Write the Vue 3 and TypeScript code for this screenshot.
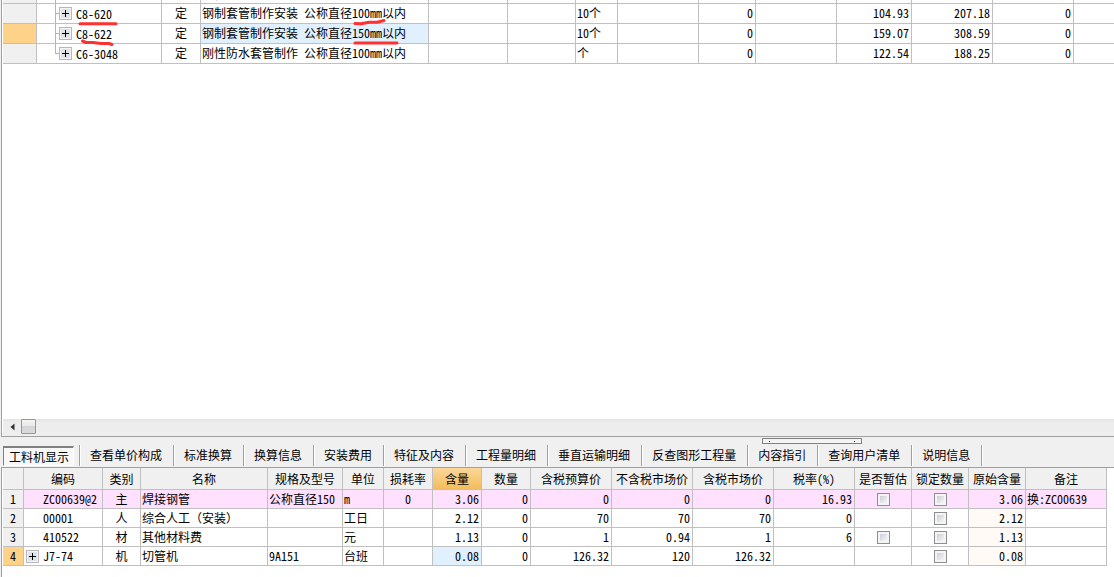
<script setup lang="ts">
import { ref } from 'vue'

interface QuotaRow {
  code: string
  name: string
  unit: string
  price: string
  total: string
  active?: boolean
}

interface MaterialRow {
  no: number
  code: string
  kind: string
  name: string
  spec: string
  unit: string
  loss: string
  content: string
  qty: string
  budget: string
  marketNet: string
  market: string
  tax: string
  estimate: boolean
  origin: string
  note: string
  expandable?: boolean
}

const quotaCols: number[] = [34, 125, 39, 228, 79, 68, 42, 81, 57, 81, 75, 81, 81]

const quotas: QuotaRow[] = [
  { code: 'C8-620', name: '钢制套管制作安装 公称直径100mm以内', unit: '10个', price: '104.93', total: '207.18' },
  { code: 'C8-622', name: '钢制套管制作安装 公称直径150mm以内', unit: '10个', price: '159.07', total: '308.59', active: true },
  { code: 'C6-3048', name: '刚性防水套管制作 公称直径100mm以内', unit: '个', price: '122.54', total: '188.25' },
]

const tabs: string[] = [
  '工料机显示', '查看单价构成', '标准换算', '换算信息', '安装费用', '特征及内容',
  '工程量明细', '垂直运输明细', '反查图形工程量', '内容指引', '查询用户清单', '说明信息',
]
const current = ref(0)

const headers: { text: string; width: number }[] = [
  { text: '', width: 21 },
  { text: '编码', width: 79 },
  { text: '类别', width: 38 },
  { text: '名称', width: 127 },
  { text: '规格及型号', width: 75 },
  { text: '单位', width: 41 },
  { text: '损耗率', width: 49 },
  { text: '含量', width: 49 },
  { text: '数量', width: 49 },
  { text: '含税预算价', width: 81 },
  { text: '不含税市场价', width: 81 },
  { text: '含税市场价', width: 81 },
  { text: '税率(%)', width: 81 },
  { text: '是否暂估', width: 57 },
  { text: '锁定数量', width: 57 },
  { text: '原始含量', width: 57 },
  { text: '备注', width: 81 },
]

const materials: MaterialRow[] = [
  { no: 1, code: 'ZC00639@2', kind: '主', name: '焊接钢管', spec: '公称直径150', unit: 'm', loss: '0', content: '3.06', qty: '0', budget: '0', marketNet: '0', market: '0', tax: '16.93', estimate: true, origin: '3.06', note: '换:ZC00639' },
  { no: 2, code: '00001', kind: '人', name: '综合人工（安装）', spec: '', unit: '工日', loss: '', content: '2.12', qty: '0', budget: '70', marketNet: '70', market: '70', tax: '0', estimate: false, origin: '2.12', note: '' },
  { no: 3, code: '410522', kind: '材', name: '其他材料费', spec: '', unit: '元', loss: '', content: '1.13', qty: '0', budget: '1', marketNet: '0.94', market: '1', tax: '6', estimate: true, origin: '1.13', note: '' },
  { no: 4, code: 'J7-74', kind: '机', name: '切管机', spec: '9A151', unit: '台班', loss: '', content: '0.08', qty: '0', budget: '126.32', marketNet: '120', market: '126.32', tax: '', estimate: false, origin: '0.08', note: '', expandable: true },
]
</script>

<template>
  <main class="window">
    <section class="pane upper">
      <div class="quota-wrap">
        <table class="grid quota">
          <colgroup>
            <col v-for="(w, i) in quotaCols" :key="i" :style="{ width: w + 'px' }" />
            <col />
          </colgroup>
          <tbody>
            <tr class="partial">
              <td class="head"></td>
              <td><div class="tree"><span class="branch"></span></div></td>
              <td></td>
              <td><div class="clip">刚性防水套管制作 安装</div></td>
              <td v-for="n in 10" :key="n"></td>
            </tr>
            <tr v-for="(q, i) in quotas" :key="q.code" :class="{ active: q.active }">
              <td class="head"></td>
              <td>
                <div class="tree">
                  <span class="branch" :class="{ last: i === quotas.length - 1 }"></span>
                  <button class="plus" type="button" :aria-label="'展开 ' + q.code"></button>
                  <span class="tree-text">{{ q.code }}</span>
                </div>
              </td>
              <td class="mid">定</td>
              <td class="name">{{ q.name }}</td>
              <td></td>
              <td></td>
              <td>{{ q.unit }}</td>
              <td></td>
              <td class="num">0</td>
              <td></td>
              <td class="num">{{ q.price }}</td>
              <td class="num">{{ q.total }}</td>
              <td class="num">0</td>
              <td></td>
            </tr>
          </tbody>
        </table>
        <svg class="marks" width="440" height="64" viewBox="0 0 440 64" aria-hidden="true">
          <path d="M77 23.8H113" />
          <path d="M79.500 41L83 42.500L90 42.500L98 43.500L106 43.500L109 44.500" />
          <path d="M352 23.500L358 23.800L366 22.300L374 22.300L381 20.500" />
          <path d="M352 43H394" />
        </svg>
      </div>
      <div class="blank"></div>
      <div class="scrollbar">
        <button class="arrow" type="button" aria-label="向左滚动">
          <svg width="5" height="8" viewBox="0 0 5 8"><path d="M4.500 0.500V7.500L0.500 4Z" fill="#333" /></svg>
        </button>
        <span class="thumb"></span>
      </div>
    </section>

    <nav class="tabs">
      <button
        v-for="(t, i) in tabs"
        :key="t"
        type="button"
        class="tab"
        :class="{ selected: current === i }"
        @click="current = i"
      ><span>{{ t }}</span></button>
      <div class="splitter"><i></i><i></i></div>
    </nav>

    <section class="pane lower">
      <table class="grid material">
        <colgroup>
          <col v-for="(h, i) in headers" :key="i" :style="{ width: h.width + 'px' }" />
        </colgroup>
        <thead>
          <tr>
            <th v-for="(h, i) in headers" :key="i" :class="{ hot: h.text === '含量' }">{{ h.text }}</th>
          </tr>
        </thead>
        <tbody>
          <tr v-for="m in materials" :key="m.no" :class="{ pink: m.no === 1, active: m.no === 4 }">
            <td class="head mid">{{ m.no }}</td>
            <td>
              <div class="tree">
                <span class="slot"><button v-if="m.expandable" class="plus" type="button" :aria-label="'展开 ' + m.code"></button></span>
                <span class="tree-text">{{ m.code }}</span>
              </div>
            </td>
            <td class="mid">{{ m.kind }}</td>
            <td>{{ m.name }}</td>
            <td>{{ m.spec }}</td>
            <td>{{ m.unit }}</td>
            <td class="mid">{{ m.loss }}</td>
            <td class="num content">{{ m.content }}</td>
            <td class="num">{{ m.qty }}</td>
            <td class="num">{{ m.budget }}</td>
            <td class="num">{{ m.marketNet }}</td>
            <td class="num">{{ m.market }}</td>
            <td class="num">{{ m.tax }}</td>
            <td class="mid"><input v-if="m.estimate" type="checkbox" :aria-label="m.name + ' 是否暂估'" /></td>
            <td class="mid"><input type="checkbox" :aria-label="m.name + ' 锁定数量'" /></td>
            <td class="num origin">{{ m.origin }}</td>
            <td>{{ m.note }}</td>
          </tr>
        </tbody>
      </table>
    </section>
  </main>
</template>

<style>
body {
  background: #f0f0f0;
}
</style>

<style scoped>
.window {
  display: flex;
  flex-direction: column;
  min-height: 100vh;
  overflow: hidden;
  background: #f0f0f0;
  color: #000;
  font-family: 'Noto Sans Mono CJK SC', 'Noto Sans CJK SC', monospace;
  font-size: 12px;
  line-height: 18px;
}
button {
  margin: 0;
  padding: 0;
  border: 0;
  background: none;
  color: inherit;
  font: inherit;
}
.pane {
  margin-left: 1px;
  border-left: 1px solid #a0a0a0;
  padding-left: 1px;
  background: #fff;
}
.upper {
  flex: 1;
  display: flex;
  flex-direction: column;
  border-bottom: 1px solid #a0a0a0;
}
.quota-wrap {
  position: relative;
}
.grid {
  width: 100%;
  table-layout: fixed;
  border-collapse: separate;
  border-spacing: 0;
}
.grid td,
.grid th {
  box-sizing: border-box;
  padding: 0 0 0 1px;
  border-right: 1px solid #c0c0c0;
  border-bottom: 1px solid #c0c0c0;
  white-space: nowrap;
  overflow: hidden;
  font-weight: normal;
  vertical-align: middle;
}
.quota td {
  height: 20px;
  line-height: 18px;
  vertical-align: top;
}
.quota td:last-child {
  border-right: 0;
}
.quota .partial td {
  height: 4px;
}
.partial .tree,
.clip {
  height: 3px;
  overflow: hidden;
}
.clip {
  display: flex;
  align-items: flex-end;
  line-height: 18px;
}
.grid td.head {
  padding: 0;
  background: #f0f0f0;
}
.grid .active td.head {
  background: #ffd28a;
}
.active .name,
.active .content {
  background: #e0f0ff;
}
.grid .mid {
  padding: 0;
  text-align: center;
}
.grid td.num {
  padding: 0 2px 0 0;
  text-align: right;
}
.tree {
  display: flex;
  align-items: center;
}
.quota .tree {
  height: 19px;
  padding-left: 17px;
}
.quota .partial .tree {
  height: 3px;
}
.branch {
  align-self: stretch;
  width: 4px;
  flex: none;
  background:
    linear-gradient(#b4b4b4, #b4b4b4) 0 0 / 1px 100% no-repeat,
    linear-gradient(#b4b4b4, #b4b4b4) 0 9px / 4px 1px no-repeat;
}
.branch.last {
  background:
    linear-gradient(#b4b4b4, #b4b4b4) 0 0 / 1px 10px no-repeat,
    linear-gradient(#b4b4b4, #b4b4b4) 0 9px / 4px 1px no-repeat;
}
.plus {
  box-sizing: border-box;
  flex: none;
  width: 13px;
  height: 13px;
  border: 1px solid #b8b8b8;
  background:
    linear-gradient(#000, #000) center / 7px 1px no-repeat,
    linear-gradient(#000, #000) center / 1px 7px no-repeat,
    #e0e4e9;
  box-shadow: inset 0 0 0 1px #f4f4f4;
}
.quota .tree-text {
  padding-left: 4px;
}
.slot {
  display: flex;
  width: 18px;
  padding-left: 1px;
  box-sizing: border-box;
}
.marks {
  position: absolute;
  left: 0;
  top: 0;
  pointer-events: none;
}
.marks path {
  fill: none;
  stroke: #ff3030;
  stroke-width: 3;
  stroke-linecap: round;
  stroke-linejoin: round;
}
.blank {
  flex: 1;
}
.scrollbar {
  display: flex;
  height: 17px;
  background: linear-gradient(#e3e3e3, #ececec 3px, #eeeeee);
}
.arrow {
  display: flex;
  align-items: center;
  justify-content: center;
  width: 18px;
  height: 15px;
}
.thumb {
  box-sizing: border-box;
  width: 15px;
  height: 15px;
  border: 1px solid #979797;
  border-radius: 1px;
  background: linear-gradient(#f4f4f4, #e8e8e8 50%, #d4d4d6 50%, #dcdcde);
}
.tabs {
  position: relative;
  display: flex;
  padding: 8px 0 1px 3px;
}
.tab {
  flex: none;
  height: 21px;
  padding: 0 11px 0 10px;
  border-right: 1px solid #a0a0a0;
  box-shadow: 1px 0 0 #fff;
  line-height: 18px;
  white-space: nowrap;
}
.tab:first-child {
  padding: 0 5px 0 0;
}
.tab span {
  display: block;
  height: 20px;
}
.tab.selected span {
  box-sizing: border-box;
  padding: 0 4px 0 5px;
  border: 1px solid #fff;
  border-top: 2px solid #808080;
  border-left: 1px solid #808080;
  background: #f8f8f8;
  line-height: 17px;
}
.splitter {
  position: absolute;
  top: 1px;
  right: 252px;
  box-sizing: border-box;
  display: flex;
  align-items: center;
  justify-content: space-between;
  width: 100px;
  height: 6px;
  padding: 0 6px;
  border: 1px solid #808080;
  background: #f4f4f4;
}
.splitter i {
  width: 1px;
  height: 1px;
  background: #000080;
}
.lower {
  border-top: 1px solid #a0a0a0;
  padding-right: 7px;
  padding-bottom: 11px;
}
.material th {
  height: 22px;
  padding: 0;
  background: #f0f0f0;
  line-height: 21px;
  text-align: center;
}
.material th.hot {
  background: linear-gradient(#fbd79a, #f3bd5c);
}
.material td {
  height: 19px;
}
.pink td {
  background: #ffe0ff;
}
.material td.origin {
  background: #fffaf5;
}
.material .pink td.origin {
  background: #ffe0ff;
}
input[type='checkbox'] {
  appearance: none;
  display: block;
  box-sizing: border-box;
  width: 13px;
  height: 13px;
  margin: 0 auto;
  border: 1px solid #8e8f8f;
  background: linear-gradient(135deg, #cbcfd5, #f6f6f6) center / 7px 7px no-repeat, #f4f4f4;
}
input[type='checkbox']:checked {
  background: #4a6a9a;
}
</style>
